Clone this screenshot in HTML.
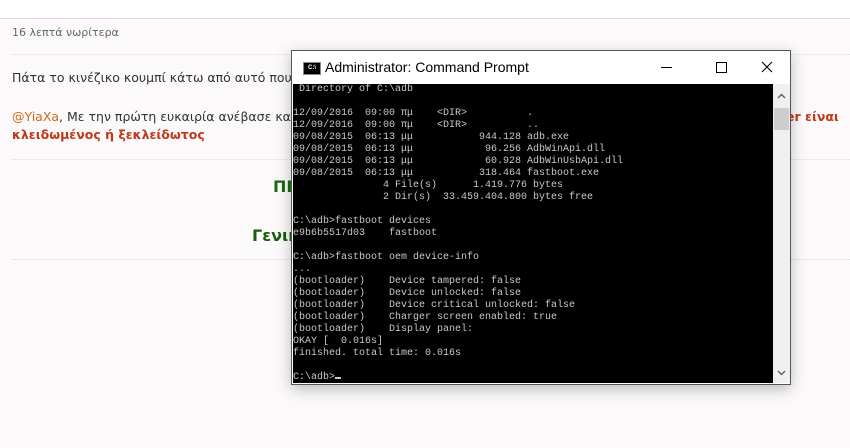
<!DOCTYPE html>
<html><head><meta charset="utf-8"><style>
body{margin:0;width:850px;height:448px;overflow:hidden;background:#fbf9f9;font-family:"DejaVu Sans","Liberation Sans",sans-serif;position:relative}
.top{position:absolute;left:0;top:0;width:850px;height:18px;background:#fff;border-bottom:1px solid #f3d6cc}
.t{position:absolute;white-space:nowrap}
.dot{position:absolute;left:12px;width:838px;border-top:1px dotted #e6d8d8}
.win{position:absolute;left:291px;top:50px;width:498px;height:333px;background:#fff;border:1px solid #555;box-shadow:0 4px 14px rgba(0,0,0,.25)}
.title{position:absolute;left:0;top:0;width:100%;height:33px;background:#fff}
.con{position:absolute;left:1px;top:33px;width:480px;height:299px;background:#000;color:#c8c8c8;font:10px/12px "Liberation Mono","DejaVu Sans Mono",monospace;white-space:pre;overflow:hidden}
.sb{position:absolute;left:481px;top:33px;width:17px;height:299px;background:#f0f0f0}
</style></head><body>
<div class="top"></div>
<div class="t" style="left:12px;top:26px;font-size:11px;color:#666">16 λεπτά νωρίτερα</div>
<div class="dot" style="top:54px"></div>
<div class="t" style="left:12px;top:70px;font-size:12.5px;color:#333">Πάτα το κινέζικο κουμπί κάτω από αυτό που λέ</div>
<div class="t" style="left:12px;top:109px;font-size:12.5px;color:#333"><span style="color:#d2691e">@YiaXa</span>, Με την πρώτη ευκαιρία ανέβασε και μία</div>
<div class="t" style="left:12px;top:127px;font-size:12.5px;color:#c0391b;font-weight:bold">κλειδωμένος ή ξεκλείδωτος</div>
<div class="t" style="left:786px;top:109px;font-size:12.5px;color:#c0391b;font-weight:bold">er είναι</div>
<div class="dot" style="top:159px"></div>
<div class="t" style="left:273px;top:177px;font-size:16px;color:#1a6b12;font-weight:bold">ΠΡ</div>
<div class="t" style="left:252px;top:226px;font-size:16px;color:#1a5c10;font-weight:bold">Γενικ</div>
<div class="dot" style="top:259px;border-color:#f0d0c8"></div>
<div class="win">
<div class="title">
<div style="position:absolute;left:11px;top:11px;width:16px;height:11px;background:#000;border:1px solid #888;color:#fff;font:bold 6px/11px 'Liberation Sans';text-align:center">C:\</div>
<div class="t" style="left:33px;top:8px;font:14px 'Liberation Sans',sans-serif;color:#000">Administrator: Command Prompt</div>
<div style="position:absolute;left:369px;top:16px;width:11px;height:1px;background:#000"></div>
<div style="position:absolute;left:424px;top:11px;width:9px;height:9px;border:1px solid #000"></div>
<svg style="position:absolute;left:469px;top:10px" width="12" height="12"><path d="M1 1L11 11M11 1L1 11" stroke="#000" stroke-width="1.1"/></svg>
</div>
<div class="con"> Directory of C:\adb

12/09/2016  09:00 πμ    &lt;DIR&gt;          .
12/09/2016  09:00 πμ    &lt;DIR&gt;          ..
09/08/2015  06:13 μμ           944.128 adb.exe
09/08/2015  06:13 μμ            96.256 AdbWinApi.dll
09/08/2015  06:13 μμ            60.928 AdbWinUsbApi.dll
09/08/2015  06:13 μμ           318.464 fastboot.exe
               4 File(s)      1.419.776 bytes
               2 Dir(s)  33.459.404.800 bytes free

C:\adb&gt;fastboot devices
e9b6b5517d03    fastboot

C:\adb&gt;fastboot oem device-info
...
(bootloader)    Device tampered: false
(bootloader)    Device unlocked: false
(bootloader)    Device critical unlocked: false
(bootloader)    Charger screen enabled: true
(bootloader)    Display panel:
OKAY [  0.016s]
finished. total time: 0.016s

C:\adb&gt;<span style="display:inline-block;width:6px;height:2px;background:#c8c8c8;vertical-align:baseline"></span></div>
<div class="sb">
<svg style="position:absolute;left:4px;top:9px" width="9" height="6"><path d="M1 5L4.5 1.5L8 5" stroke="#606060" stroke-width="1.4" fill="none"/></svg>
<div style="position:absolute;left:1px;top:24px;width:15px;height:22px;background:#cdcdcd"></div>
<svg style="position:absolute;left:4px;top:286px" width="9" height="6"><path d="M1 1L4.5 4.5L8 1" stroke="#606060" stroke-width="1.4" fill="none"/></svg>
</div>
</div>
</body></html>
